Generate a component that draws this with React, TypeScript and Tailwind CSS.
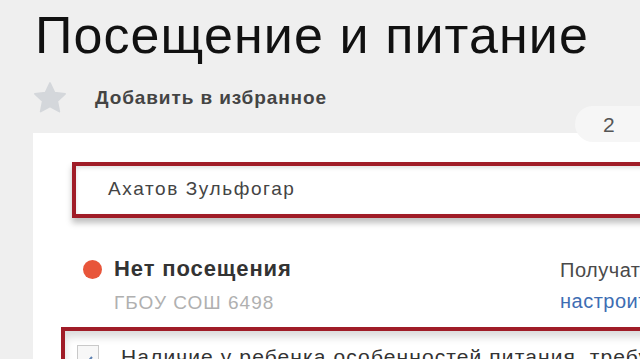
import React from "react";

export default function App() {
  return (
    <div className="relative w-[640px] h-[359px] overflow-hidden bg-[#efefef] font-['Liberation_Sans',Arial,sans-serif]">
      <h1 className="pl-[35px] pt-[9px] text-[52px] leading-[52px] tracking-[1.1px] text-[#111] whitespace-nowrap">
        Посещение и питание
      </h1>

      <div className="mt-[21px] ml-[34px] flex items-center h-[32px]">
        <svg width="32" height="32" viewBox="0 0 30 30">
          <path
            d="M15 0.8 L19.3 9.9 L29.2 11.1 L21.9 17.9 L23.8 27.8 L15 22.9 L6.2 27.8 L8.1 17.9 L0.8 11.1 L10.7 9.9 Z"
            fill="#d4d7db"
            stroke="#d4d7db"
            strokeWidth="1.5"
            strokeLinejoin="round"
          />
        </svg>
        <span className="ml-[29px] text-[19px] leading-[22px] tracking-[0.9px] text-[#444] font-semibold whitespace-nowrap">
          Добавить в избранное
        </span>
      </div>

      <div className="mt-[19px] ml-[33px] w-[700px] h-[240px] bg-white pt-[29px]">
        <div className="ml-[39px] h-[56px] border-[4px] border-[#a01c27] bg-white shadow-[0_5px_6px_rgba(0,0,0,0.25),inset_0_2px_4px_rgba(0,0,0,0.12)] pl-[32px] pt-[12px]">
          <span className="text-[19px] leading-[20px] tracking-[1.6px] text-[#444] whitespace-nowrap">Ахатов Зульфогар</span>
        </div>

        <div className="mt-[39px] flex">
          <div className="ml-[50px] w-[477px] shrink-0 flex flex-col">
            <div className="flex items-center h-[24px]">
              <span className="w-[19px] h-[19px] rounded-full bg-[#e8553a]" />
              <span className="ml-[12px] text-[22px] leading-[24px] tracking-[0.9px] font-bold text-[#333] whitespace-nowrap">
                Нет посещения
              </span>
            </div>
            <span className="mt-[11px] ml-[31px] text-[19px] leading-[22px] tracking-[1px] text-[#b0b0b0] whitespace-nowrap">
              ГБОУ СОШ 6498
            </span>
          </div>
          <div className="shrink-0 flex flex-col">
            <span className="mt-[1px] text-[20px] leading-[24px] tracking-[0.5px] text-[#4a4a4a] whitespace-nowrap">Получать уведомления</span>
            <span className="mt-[7px] text-[20px] leading-[24px] tracking-[0.5px] text-[#3d6db3] whitespace-nowrap">настроить</span>
          </div>
        </div>

        <div className="mt-[13px] ml-[28px] h-[80px] border-[4px] border-[#a01c27] bg-white shadow-[inset_0_6px_8px_rgba(0,0,0,0.15)] flex items-start pt-[14px] pl-[12px]">
          <span className="w-[22px] h-[22px] shrink-0 border border-[#c9c9c9] bg-[#f7f7f7] flex items-end justify-start pl-[3px]">
            <svg width="12" height="10" viewBox="0 0 12 10">
              <path d="M1 5 L4.5 8.5 L11 1" stroke="#5b7fb0" strokeWidth="2" fill="none" />
            </svg>
          </span>
          <span className="ml-[22px] text-[21px] leading-[24px] tracking-[1.1px] text-[#333] whitespace-nowrap">
            Наличие у ребенка особенностей питания, требующих
          </span>
        </div>
      </div>

      <div className="absolute left-[575px] top-[106px] w-[90px] h-[36px] rounded-[18px] bg-[#f6f6f6] pl-[28px] pt-[7px]">
        <span className="text-[21px] leading-[24px] text-[#555]">2</span>
      </div>
    </div>
  );
}
